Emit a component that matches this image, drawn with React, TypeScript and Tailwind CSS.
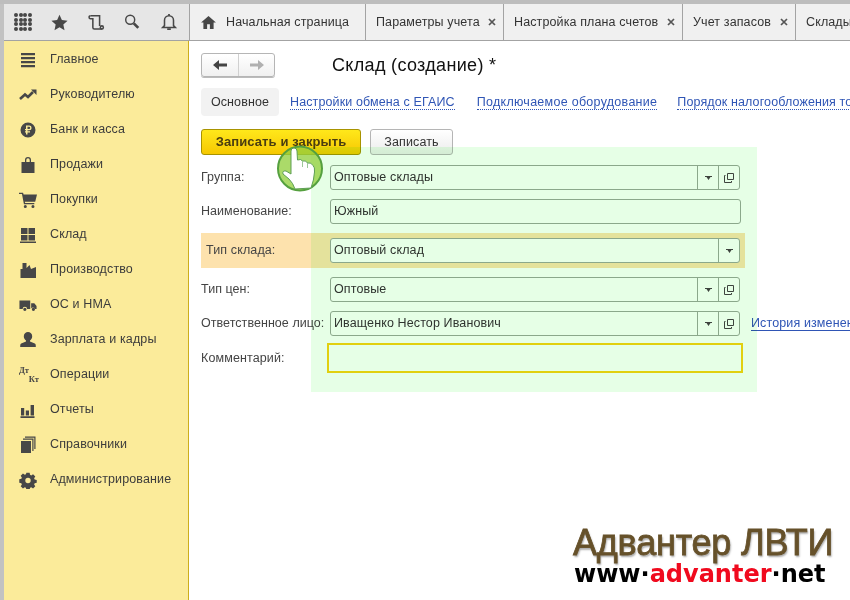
const dots = Array.from({ length: 16 });

function Icon({ d, className = "" }: { d: string; className?: string }) {
  return (
    <svg viewBox="0 0 20 20" className={`h-5 w-5 fill-[#474747] ${className}`}>
      <path d={d} fillRule="evenodd" />
    </svg>
  );
}

const menu: { label: string; icon: React.ReactNode }[] = [
  { label: "Главное", icon: <Icon d="M3 3h14v2.200H3zM3 7h14v2.200H3zM3 11h14v2.200H3zM3 15h14v2.200H3z" /> },
  {
    label: "Руководителю",
    icon: (
      <svg viewBox="0 0 20 20" className="h-5 w-5 fill-none stroke-[#474747] stroke-[2.600]">
        <path d="M2 14l5-4.500 3 2.500 5-5" />
        <path d="M13 4.500h5.500V10z" className="fill-[#474747] stroke-none" />
      </svg>
    ),
  },
  {
    label: "Банк и касса",
    icon: <Icon d="M10 2.500a7.500 7.500 0 100 15 7.500 7.500 0 000-15zM8 5.500h3.200a2.400 2.400 0 010 4.800H9.500v1H12v1.300H9.500v1.900H8v-1.900H7v-1.300h1v-1H7V9h1zM9.500 6.800V9h1.600a1.100 1.100 0 000-2.200z" />,
  },
  {
    label: "Продажи",
    icon: <Icon d="M3.500 7h3.500V5a3 3 0 016 0v2h3.500v11h-13zM8.300 7h3.400V5a1.700 1.700 0 00-3.400 0z" />,
  },
  {
    label: "Покупки",
    icon: <Icon className="scale-90" d="M0 2h4.500l.6 2H20l-2 8H6.500l.3 1.300H17v1.400H5.500L3.300 3.400H0zM7 15.500a1.700 1.700 0 110 3.400 1.700 1.700 0 010-3.400zM15.500 15.500a1.700 1.700 0 110 3.400 1.700 1.700 0 010-3.400z" />,
  },
  {
    label: "Склад",
    icon: <Icon d="M3 3h6.500v6H3zM10.500 3H17v6h-6.500zM3 10h6.500v5.500H3zM10.500 10H17v5.500h-6.500zM2 16.500h16V18H2z" />,
  },
  { label: "Производство", icon: <Icon d="M2.500 18V9h2V3h4v5l3-3 1.500 4 5-2v11z" /> },
  {
    label: "ОС и НМА",
    icon: <Icon className="scale-90" d="M.500 5H12.500v9.500H9a2.500 2.500 0 00-5 0H.500zM13.500 8H17l2.500 3v3.500h-1.500a2.500 2.500 0 00-4.500-.5zM6.500 13a1.800 1.800 0 110 3.600 1.800 1.800 0 010-3.600zM16 13a1.800 1.800 0 110 3.600 1.800 1.800 0 010-3.600z" />,
  },
  {
    label: "Зарплата и кадры",
    icon: <Icon d="M10 2a4.200 4.200 0 014.200 4.200c0 2-1 3.500-2.200 4.300v1l4.800 2c1 .5 1 1.500 1 3.500H2.200c0-2 0-3 1-3.500l4.800-2v-1C6.800 9.700 5.800 8.200 5.800 6.200A4.200 4.200 0 0110 2z" />,
  },
  {
    label: "Операции",
    icon: (
      <div className="relative h-5 w-5 font-['Liberation_Serif',serif] text-[8.500px] leading-[9px] font-bold tracking-normal text-[#474747]">
        <span className="absolute top-[1px] left-[1px]">Дт</span>
        <span className="absolute right-[-1px] bottom-[1px]">Кт</span>
      </div>
    ),
  },
  { label: "Отчеты", icon: <Icon d="M3 8h3.200v7.500H3zM7.800 10.500H11v5H7.800zM12.600 5H16v10.500h-3.400zM2.500 16.200h14V18h-14z" /> },
  {
    label: "Справочники",
    icon: <Icon d="M3 6h10v12H3zM5 3.500h10.500V16H14.300V4.700H5zM7 1.500h10.500V14h-1.200V2.700H7z" />,
  },
  {
    label: "Администрирование",
    icon: <Icon d="M8.200 2h3.600l.5 2.300 1.300.6 2-1.300 2.500 2.500-1.300 2 .6 1.300 2.300.5v3.200l-2.300.5-.6 1.300 1.300 2-2.500 2.500-2-1.300-1.300.6-.5 2.300H8.200l-.5-2.300-1.300-.6-2 1.300-2.500-2.500 1.300-2-.6-1.300-2.300-.5V9.200l2.300-.5.6-1.300-1.300-2 2.500-2.500 2 1.300 1.300-.6zM10 7.500a3 3 0 100 6 3 3 0 000-6z" className="scale-90" />,
  },
];

const tabs = [
  { label: "Параметры учета", w: "w-[138px]" },
  { label: "Настройка плана счетов", w: "w-[179px]" },
  { label: "Учет запасов", w: "w-[113px]" },
];

function Field({
  value,
  select = false,
  open = false,
  width = "w-[410px]",
}: {
  value: string;
  select?: boolean;
  open?: boolean;
  width?: string;
}) {
  return (
    <div className={`flex h-[25px] shrink-0 items-stretch rounded-[3px] border border-[#9aa89a] bg-white ${width}`}>
      <div className="flex-1 truncate pl-[3px] leading-[23px] text-[#333]">{value}</div>
      {select && (
        <div className="flex w-[21px] items-center justify-center border-l border-[#9aa89a]">
          <svg viewBox="0 0 7 4" className="h-1 w-[7px] fill-[#444]">
            <path d="M0 0h7v1H5.500L3.500 4 1.500 1H0z" />
          </svg>
        </div>
      )}
      {open && (
        <div className="flex w-[21px] items-center justify-center border-l border-[#9aa89a]">
          <svg viewBox="0 0 10 10" className="h-[10px] w-[10px] fill-none stroke-[#444]">
            <path d="M3.500.5h6v6h-6z" />
            <path d="M1.500 2.500H.5v7h7V8" />
          </svg>
        </div>
      )}
    </div>
  );
}

function Label({ children }: { children: string }) {
  return <div className="w-[129px] shrink-0 tracking-[0.05px] whitespace-nowrap text-[#444]">{children}</div>;
}

export default function App() {
  return (
    <div className="relative flex h-[600px] w-[850px] flex-col overflow-hidden bg-white font-['Liberation_Sans',sans-serif] text-[12.5px] tracking-[0.12px] text-[#333]">
      <div className="h-1 shrink-0 bg-[#bdbdbd]" />

      <div className="flex min-h-0 flex-1">
        <div className="w-1 shrink-0 bg-[#c2c2c2]" />

        <div className="flex w-[185px] shrink-0 flex-col">
          {/* верхняя панель */}
          <div className="flex h-[37px] items-center border-b border-[#a3a3a3] bg-[#e6e6e6] pl-[10px]">
            <div className="grid w-[18px] grid-cols-4 gap-[0.700px]">
              {dots.map((_, i) => (
                <span key={i} className="h-1 w-1 rounded-full bg-[#474747]" />
              ))}
            </div>
            <svg viewBox="0 0 20 20" className="ml-[19px] h-[17px] w-[17px] fill-[#474747]">
              <path d="M10 1l2.800 6.200 6.700.7-5 4.500 1.400 6.600L10 15.600 4.100 19l1.400-6.600-5-4.500 6.700-.7z" />
            </svg>
            <svg viewBox="0 0 20 20" className="ml-[19px] h-[18px] w-[18px] fill-none stroke-[#474747] stroke-[1.700]">
              <path d="M4 3h10v11.500" />
              <path d="M4 3a1.700 1.700 0 00-1.700 1.700A1.700 1.700 0 004 6.400h2.500V16A1.700 1.700 0 008.200 17.700H17" />
              <circle cx="16.500" cy="16" r="1.700" />
            </svg>
            <svg viewBox="0 0 20 20" className="ml-[18px] h-[18px] w-[18px] fill-none stroke-[#474747] stroke-[1.600]">
              <circle cx="8" cy="7.500" r="5" />
              <path d="M12 11.500l5 5" strokeWidth="3" />
            </svg>
            <svg viewBox="0 0 20 20" className="ml-[19px] h-[18px] w-[18px] fill-none stroke-[#474747] stroke-[1.700]">
              <path d="M5 14V8a5 5 0 0110 0v6l2 2H3z" />
              <path d="M10 1v2M8 18h4" strokeWidth="2" />
            </svg>
          </div>

          {/* меню разделов */}
          <nav className="min-h-0 flex-1 border-r border-[#cdae1c] bg-[#fbeb9a] pt-px">
            {menu.map((m) => (
              <div key={m.label} className="flex h-[35px] items-center pl-[14px] text-[#3c3c3c]">
                <div className="w-[32px] shrink-0">{m.icon}</div>
                <span>{m.label}</span>
              </div>
            ))}
          </nav>
        </div>

        <div className="flex min-w-0 flex-1 flex-col">
          {/* вкладки */}
          <div className="flex h-[37px] shrink-0 items-stretch overflow-hidden border-b border-[#a3a3a3] bg-[#f0f0f0]">
            <div className="flex w-[177px] shrink-0 items-center border-x border-[#a3a3a3] pl-[11px]">
              <svg viewBox="0 0 16 14" className="h-[13px] w-[15px] fill-[#474747]">
                <path d="M8 0l8 7h-2.500v7H9.500V9h-3v5H2.500V7H0z" />
              </svg>
              <span className="ml-[10px] whitespace-nowrap">Начальная страница</span>
            </div>
            {tabs.map((t) => (
              <div key={t.label} className={`flex shrink-0 items-center justify-between border-r border-[#a3a3a3] pr-[7px] pl-[10px] ${t.w}`}>
                <span className="whitespace-nowrap">{t.label}</span>
                <svg viewBox="0 0 8 8" className="h-2 w-2 stroke-[#555] stroke-[1.700]">
                  <path d="M1 1l6 6M7 1L1 7" />
                </svg>
              </div>
            ))}
            <div className="flex shrink-0 items-center pl-[10px] whitespace-nowrap">Склады</div>
          </div>

          {/* форма */}
          <div className="flex min-h-0 flex-1 flex-col overflow-hidden pt-[12px] pl-[12px]">
            <div className="flex h-[24px] shrink-0 items-center">
              <div className="flex h-[24px] w-[74px] shrink-0 rounded-[3px] border border-[#b5b5b5] bg-gradient-to-b from-white to-[#f0f0f0] shadow-[0_1px_0_#bbb]">
                <div className="flex w-[37px] items-center justify-center border-r border-[#d0d0d0]">
                  <svg viewBox="0 0 14 10" className="h-[10px] w-[14px] fill-[#444]">
                    <path d="M0 5l6-5v3.500h8v3H6V10z" />
                  </svg>
                </div>
                <div className="flex flex-1 items-center justify-center">
                  <svg viewBox="0 0 14 10" className="h-[10px] w-[14px] fill-[#b0b0b0]">
                    <path d="M14 5L8 0v3.500H0v3h8V10z" />
                  </svg>
                </div>
              </div>
              <div className="ml-[57px] pt-px text-[18px] tracking-[0.33px] whitespace-nowrap text-[#111]">Склад (создание) *</div>
            </div>

            <div className="mt-[11px] flex h-[28px] shrink-0 items-center whitespace-nowrap">
              <div className="flex h-[28px] w-[78px] shrink-0 items-center justify-center rounded-[4px] bg-[#f2f2f2] text-[#333]">Основное</div>
              <a className="ml-[11px] shrink-0 border-b border-dotted border-[#2f55b5] leading-[14px] text-[#2f55b5]">Настройки обмена с ЕГАИС</a>
              <a className="ml-[22px] shrink-0 border-b border-dotted border-[#2f55b5] leading-[14px] tracking-[0.28px] text-[#2f55b5]">Подключаемое оборудование</a>
              <a className="ml-[20px] shrink-0 border-b border-dotted border-[#2f55b5] leading-[14px] text-[#2f55b5]">Порядок налогообложения товаров</a>
            </div>

            <div className="mt-[13px] flex h-[26px] shrink-0 items-stretch">
              <button className="w-[160px] shrink-0 rounded-[3px] border border-[#a89300] bg-gradient-to-b from-[#ffe81a] to-[#f6c800] text-[13px] font-bold tracking-[0.1px] text-[#4a3d10]">Записать и закрыть</button>
              <button className="ml-[9px] w-[83px] shrink-0 rounded-[3px] border border-[#b5b5b5] bg-gradient-to-b from-white to-[#ececec] text-[#333]">Записать</button>
            </div>

            <div className="mt-[10px] flex h-[25px] shrink-0 items-center">
              <Label>Группа:</Label>
              <Field value="Оптовые склады" select open />
            </div>
            <div className="mt-[9px] flex h-[25px] shrink-0 items-center">
              <Label>Наименование:</Label>
              <Field value="Южный" width="w-[411px]" />
            </div>
            <div className="mt-[9px] flex h-[35px] w-[544px] shrink-0 items-center bg-[#fde2ad] pl-[5px]">
              <div className="w-[124px] shrink-0 text-[#444]">Тип склада:</div>
              <Field value="Оптовый склад" select />
            </div>
            <div className="mt-[9px] flex h-[25px] shrink-0 items-center">
              <Label>Тип цен:</Label>
              <Field value="Оптовые" select open />
            </div>
            <div className="mt-[9px] flex h-[25px] shrink-0 items-center whitespace-nowrap">
              <Label>Ответственное лицо:</Label>
              <Field value="Иващенко Нестор Иванович" select open />
              <a className="ml-[11px] shrink-0 border-b border-[#2f55b5] leading-[14px] text-[#2f55b5]">История изменения</a>
            </div>
            <div className="mt-[7px] flex h-[30px] shrink-0 items-center">
              <div className="w-[126px] shrink-0 text-[#444]">Комментарий:</div>
              <div className="h-[30px] w-[416px] shrink-0 border-2 border-[#fad010] bg-white" />
            </div>
          </div>
        </div>
      </div>

      {/* зеленая подсветка поверх формы */}
      <div className="pointer-events-none absolute top-[147px] left-[311px] h-[245px] w-[446px] bg-[#e6ffe6] mix-blend-multiply" />

      {/* указатель */}
      <svg viewBox="0 0 46 47" className="pointer-events-none absolute top-[145px] left-[277px] h-[47px] w-[46px]">
        <circle cx="23" cy="23.500" r="22" fill="#93cf3f" fillOpacity="0.78" stroke="#55a03f" strokeWidth="2" />
        <path
          d="M14 6Q14 3 17 3 20 3 20 6L20.500 15Q24 13.500 25.500 16 29 15 30.500 18 34 17 36 20.500 38 22 37.500 27 37 35 34 43L18 44Q16 38 12 34L6 29Q5 25.500 9 26L14 29Z"
          fill="#fff"
          stroke="#5e9f55"
          strokeWidth="1"
          strokeLinejoin="round"
        />
        <path d="M25.500 16v6M30.500 18v5" fill="none" stroke="#9cc79a" strokeWidth="1" />
      </svg>

      {/* логотип */}
      <div className="absolute top-[524px] left-[573px] w-[270px] whitespace-nowrap">
        <div className="text-[36px] leading-[38px] font-normal tracking-[-0.2px] text-[#66512a] [-webkit-text-stroke:0.8px_#66512a] [text-shadow:1px_2px_2px_rgba(0,0,0,0.35)]">
          Адвантер ЛВТИ
        </div>
        <div className="mt-px pl-px font-['DejaVu_Sans',sans-serif] text-[24px] leading-[23px] font-bold tracking-normal text-black">
          www·<span className="text-[#f00a1e]">advanter</span>·net
        </div>
      </div>
    </div>
  );
}
